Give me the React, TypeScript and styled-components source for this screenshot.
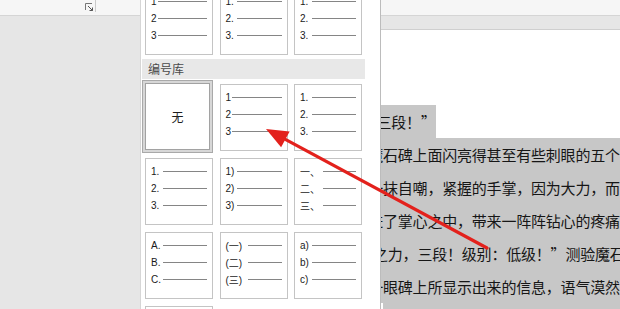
import React from 'react';
import styled, {createGlobalStyle} from 'styled-components';

const GlobalStyle = createGlobalStyle`
  html, body {
    margin: 0;
    padding: 0;
    background: #e6e6e6;
  }
  body {
    width: 620px;
    height: 309px;
    overflow: hidden;
    font-family: 'Liberation Sans', 'Noto Sans CJK SC', sans-serif;
  }
`;

const CJK = `'Noto Sans CJK SC', 'Liberation Sans', sans-serif`;

const Screen = styled.div`
  position: relative;
  width: 620px;
  height: 309px;
  overflow: hidden;
  display: flex;
  flex-direction: column;
  background: #e6e6e6;
`;

const Ribbon = styled.div`
  flex: none;
  height: 15px;
  display: flex;
  background: #f6f6f6;
  border-bottom: 1px solid #d5d5d5;
`;

const RibbonGroup = styled.div`
  width: 96px;
  height: 12px;
  display: flex;
  justify-content: flex-end;
  align-items: flex-start;
  padding-top: 3px;
  box-sizing: border-box;
  border-right: 1px solid #c9c9c9;
`;

const Launcher = styled.svg`
  width: 9px;
  height: 9px;
  margin-right: 1px;
`;

const Workspace = styled.div`
  flex: 1;
  display: flex;
  padding-top: 13px;
  min-height: 0;
`;

const Page = styled.div`
  flex: 1;
  margin-left: 300px;
  background: #fff;
  border-top: 1px solid #cfcfcf;
  padding: 75px 0 0 83px;
  overflow: hidden;
  font-family: ${CJK};
  font-size: 15px;
  letter-spacing: -0.2px;
  color: #161616;
`;

const Line = styled.div<{$shift: number; $selected?: boolean}>`
  height: 33px;
  line-height: 33px;
  white-space: nowrap;
  margin-left: ${({$shift}) => $shift}px;
  background: ${({$selected}) => ($selected ? '#c7c7c7' : 'transparent')};
`;

const Highlight = styled.span`
  display: inline-block;
  height: 33px;
  background: #c7c7c7;
`;

const Panel = styled.div`
  position: absolute;
  top: 0;
  bottom: 0;
  left: 140px;
  width: 241px;
  box-sizing: border-box;
  z-index: 2;
  background: #fff;
  border-left: 1px solid #d6d6d6;
  border-right: 1px solid #bcbcbc;
  padding-left: 4px;
  overflow: hidden;
`;

const Grid = styled.div`
  display: grid;
  grid-template-columns: repeat(3, 68px);
  grid-auto-rows: 67px;
  column-gap: 6.5px;
  row-gap: 7px;
`;

const RecentGrid = styled(Grid)`
  margin-top: -12px;
`;

const SectionHeader = styled.div`
  margin: 4px 15px 5px -3px;
  height: 20px;
  line-height: 20px;
  padding-left: 6px;
  background: #e8e8e8;
  font-family: ${CJK};
  font-size: 12px;
  color: #4a4a4a;
`;

const Cell = styled.div<{$selected?: boolean}>`
  box-sizing: border-box;
  background: #fff;
  border: 1px solid #c4c4c4;
  padding: 4px 5px 0 5px;
  display: flex;
  flex-direction: column;
  ${({$selected}) =>
    $selected &&
    `
    margin: -4px 0 -2px -3px;
    border-color: #a9a9a9;
    box-shadow: inset 0 0 0 2px #d7d7d7, inset 0 0 0 3px #a2a2a2;
    align-items: center;
    justify-content: center;
    padding: 0;
  `}
`;

const NoneLabel = styled.span`
  font-family: ${CJK};
  font-size: 12px;
  color: #1e1e1e;
`;

const ItemRow = styled.div`
  height: 17px;
  display: flex;
  align-items: center;
`;

const ItemLabel = styled.span<{$width: number}>`
  flex: none;
  width: ${({$width}) => $width}px;
  font-size: 10px;
  color: #1a1a1a;
  white-space: nowrap;
`;

const Rule = styled.span`
  flex: 1;
  height: 1px;
  background: #858585;
`;

const Overlay = styled.svg`
  position: absolute;
  top: 0;
  left: 0;
  z-index: 3;
  pointer-events: none;
`;

type Format = {labels?: string[]; width?: number; none?: boolean};

const recent: Format[] = [
  {labels: ['1', '2', '3'], width: 7},
  {labels: ['1.', '2.', '3.'], width: 11.5},
  {labels: ['1.', '2.', '3.'], width: 12},
];

const library: Format[] = [
  {none: true},
  {labels: ['1', '2', '3'], width: 6.5},
  {labels: ['1.', '2.', '3.'], width: 12},
  {labels: ['1.', '2.', '3.'], width: 12},
  {labels: ['1)', '2)', '3)'], width: 11.5},
  {labels: ['一、', '二、', '三、'], width: 23},
  {labels: ['A.', 'B.', 'C.'], width: 12},
  {labels: ['(一)', '(二)', '(三)'], width: 22.5},
  {labels: ['a)', 'b)', 'c)'], width: 12},
  {},
];

const FormatCell = ({format}: {format: Format}) => {
  if (format.none) {
    return (
      <Cell $selected>
        <NoneLabel>无</NoneLabel>
      </Cell>
    );
  }
  return (
    <Cell>
      {format.labels?.map(label => (
        <ItemRow key={label}>
          <ItemLabel $width={format.width ?? 12}>{label}</ItemLabel>
          <Rule />
        </ItemRow>
      ))}
    </Cell>
  );
};

// arrow from the text back to the "1 2 3" format
const tip = {x: 266, y: 129};
const tail = {x: 487, y: 248};

const Arrow = () => {
  const dx = tail.x - tip.x;
  const dy = tail.y - tip.y;
  const len = Math.hypot(dx, dy);
  const ux = dx / len;
  const uy = dy / len;
  const bx = tip.x + ux * 22;
  const by = tip.y + uy * 22;
  const nx = -uy * 9;
  const ny = ux * 9;
  return (
    <Overlay width={620} height={309} viewBox="0 0 620 309">
      <line x1={tail.x} y1={tail.y} x2={bx} y2={by} stroke="#e3211c" strokeWidth={3.2} strokeLinecap="round" />
      <polygon
        points={`${tip.x},${tip.y} ${bx + nx},${by + ny} ${bx - nx},${by - ny}`}
        fill="#e3211c"
      />
    </Overlay>
  );
};

export default function App() {
  return (
    <>
      <GlobalStyle />
      <Screen>
        <Ribbon>
          <RibbonGroup>
            <Launcher viewBox="0 0 9 9">
              <path d="M0.5 7V0.5H7" fill="none" stroke="#777" strokeWidth={1} />
              <path d="M3 3L7.5 7.5M4.5 7.5H7.5V4.5" fill="none" stroke="#555" strokeWidth={1} />
            </Launcher>
          </RibbonGroup>
        </Ribbon>
        <Workspace>
          <Page>
            <Line $shift={-6.5}>
              <Highlight>三段！”</Highlight>
            </Line>
            <Line $shift={-14.8} $selected>
              魔石碑上面闪亮得甚至有些刺眼的五个
            </Line>
            <Line $shift={-14.8} $selected>
              一抹自嘲，紧握的手掌，因为大力，而导
            </Line>
            <Line $shift={-14.8} $selected>
              进了掌心之中，带来一阵阵钻心的疼痛
            </Line>
            <Line $shift={-10} $selected>
              之力，三段！级别：低级！”测验魔石
            </Line>
            <Line $shift={-14.8} $selected>
              一眼碑上所显示出来的信息，语气漠然
            </Line>
            <Line $shift={0} $selected />
          </Page>
        </Workspace>
        <Panel>
          <RecentGrid>
            {recent.map((format, i) => (
              <FormatCell key={i} format={format} />
            ))}
          </RecentGrid>
          <SectionHeader>编号库</SectionHeader>
          <Grid>
            {library.map((format, i) => (
              <FormatCell key={i} format={format} />
            ))}
          </Grid>
        </Panel>
        <Arrow />
      </Screen>
    </>
  );
}
